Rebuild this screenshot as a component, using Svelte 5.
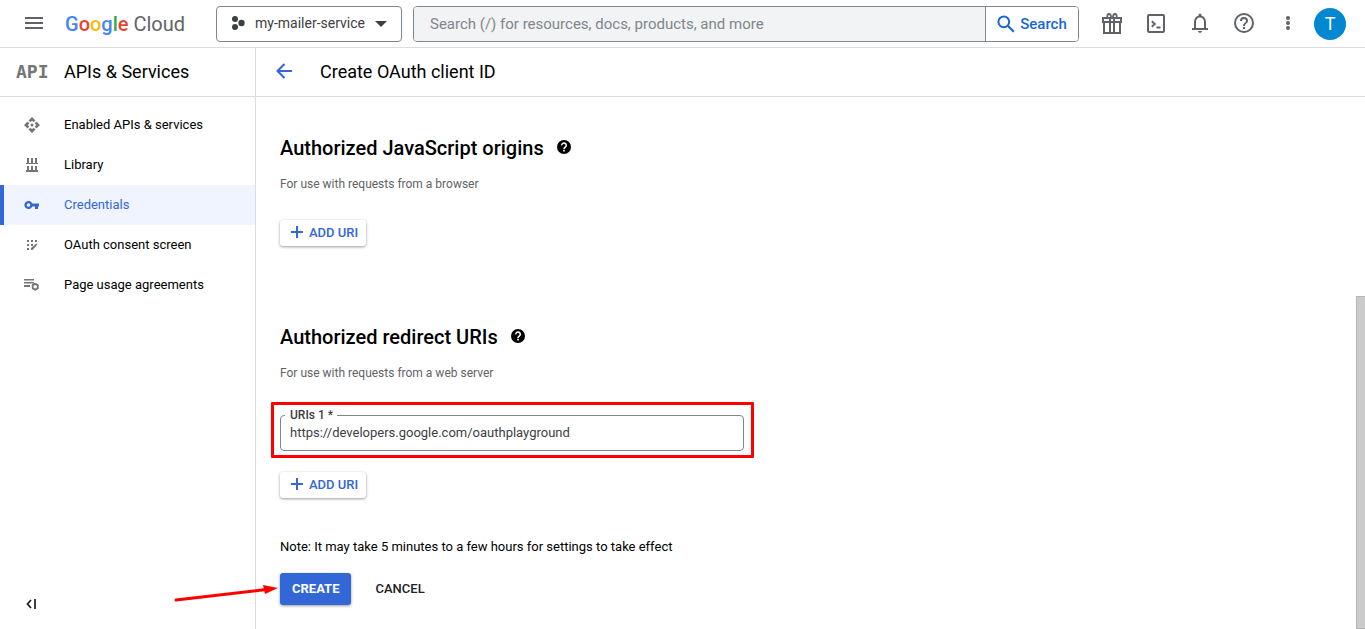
<script lang="ts">
	type NavItem = { id: string; label: string };

	const navItems: NavItem[] = [
		{ id: 'enabled', label: 'Enabled APIs & services' },
		{ id: 'library', label: 'Library' },
		{ id: 'credentials', label: 'Credentials' },
		{ id: 'consent', label: 'OAuth consent screen' },
		{ id: 'agreements', label: 'Page usage agreements' }
	];

	const brand = [
		['G', 'blue'], ['o', 'red'], ['o', 'yellow'],
		['g', 'blue'], ['l', 'green'], ['e', 'red']
	];

	let active = $state('credentials');
	let project = $state('my-mailer-service');
	let query = $state('');
	let origins = $state<string[]>([]);
	let redirects = $state<string[]>(['https://developers.google.com/oauthplayground']);
</script>

{#snippet helpIcon()}
	<svg class="help" viewBox="0 0 14 14" width="14" height="14" aria-hidden="true">
		<circle cx="7" cy="7" r="7" fill="#000" />
		<path d="M4.7 5.4a2.3 2.3 0 1 1 3.6 1.8c-.8.6-1.3.8-1.3 1.7" fill="none" stroke="#fff" stroke-width="1.5" />
		<path d="M6.2 9.8h1.6v1.6H6.2z" fill="#fff" />
	</svg>
{/snippet}

{#snippet addButton(list: string[])}
	<button class="add" onclick={() => list.push('')}>
		<svg viewBox="0 0 12 12" width="12" height="12" aria-hidden="true">
			<path d="M6 0v12M0 6h12" stroke="#3367d6" stroke-width="2" />
		</svg>
		ADD URI
	</button>
{/snippet}

{#snippet uriField(list: string[], i: number, name: string)}
	<div class="field">
		<label for="{name}-{i}">URIs {i + 1} *</label>
		<input id="{name}-{i}" type="text" bind:value={list[i]} />
	</div>
{/snippet}

<div class="page">
	<header class="topbar">
		<button class="icon-btn" aria-label="Main menu">
			<svg viewBox="0 0 24 24" width="24" height="24">
				<path d="M3 5h18v2H3zM3 10h18v2H3zM3 15h18v2H3z" fill="#5f6368" />
			</svg>
		</button>
		<a class="brand" href="#home">
			<span class="google">{#each brand as [letter, color]}<span class={color}>{letter}</span>{/each}</span>
			Cloud
		</a>

		<div class="project">
			<svg class="project-icon" viewBox="0 0 14 14" width="14" height="14" aria-hidden="true">
				<g fill="#3c4043">
					<circle cx="4" cy="3" r="3" />
					<circle cx="4" cy="11" r="3" />
					<circle cx="10.5" cy="7" r="3.2" />
				</g>
			</svg>
			<select aria-label="Project" bind:value={project}>
				<option>my-mailer-service</option>
			</select>
			<svg class="caret" viewBox="0 0 12 6" width="12" height="6" aria-hidden="true">
				<path d="M0 0h12L6 6z" fill="#3c4043" />
			</svg>
		</div>

		<form class="search" onsubmit={(e) => e.preventDefault()}>
			<input
				type="text"
				aria-label="Search resources"
				placeholder="Search (/) for resources, docs, products, and more"
				bind:value={query}
			/>
			<button type="submit">
				<svg viewBox="0 0 18 18" width="18" height="18" aria-hidden="true">
					<circle cx="6.8" cy="6.8" r="5.4" fill="none" stroke="#1967d2" stroke-width="2" />
					<path d="M10.8 10.8l6 6" stroke="#1967d2" stroke-width="2.2" />
				</svg>
				Search
			</button>
		</form>

		<div class="tools">
			<button class="icon-btn" aria-label="Free trial">
				<svg viewBox="0 0 24 24" width="24" height="24" fill="none" stroke="#5f6368" stroke-width="2">
					<path d="M3 6h18v4H3zM4 10v11h16V10M10 6v15M14 6v15" />
					<path d="M11 5c0-2-.8-3-2-3S7 3.300 7.400 5M13 5c0-2 .8-3 2-3s2 1.300 1.600 3" stroke-width="1.800" />
				</svg>
			</button>
			<button class="icon-btn" aria-label="Cloud Shell">
				<svg viewBox="0 0 24 24" width="24" height="24" fill="none" stroke="#5f6368" stroke-width="2">
					<rect x="4" y="3" width="16" height="17" rx="1" />
					<path d="M7.800 9.200l3 2.800-3 2.800M12.500 15.500h4" stroke-width="1.900" />
				</svg>
			</button>
			<button class="icon-btn" aria-label="Notifications">
				<svg viewBox="0 0 24 24" width="24" height="24" fill="#5f6368">
					<path d="M18 16v-6c0-3.070-1.630-5.640-4.500-6.320V3a1.500 1.500 0 0 0-3 0v.680C7.640 4.360 6 6.920 6 10v6H4v2h16v-2zm-2 0H8v-6c0-2.480 1.510-4.500 4-4.500s4 2.020 4 4.500zM10 19h4c0 1.100-.900 1.800-2 1.800s-2-.700-2-1.800z" />
				</svg>
			</button>
			<button class="icon-btn" aria-label="Help">
				<svg viewBox="0 0 24 24" width="24" height="24" fill="#5f6368">
					<path d="M11 17h2v-2h-2zm1-16a10 10 0 1 0 0 20 10 10 0 0 0 0-20zm0 18a8 8 0 1 1 0-16 8 8 0 0 1 0 16zm0-14a4 4 0 0 0-4 4h2a2 2 0 1 1 4 0c0 2-3 1.750-3 5h2c0-2.250 3-2.500 3-5a4 4 0 0 0-4-4z" />
				</svg>
			</button>
			<button class="icon-btn" aria-label="More options">
				<svg viewBox="0 0 24 24" width="24" height="24" fill="#5f6368">
					<circle cx="12" cy="6" r="2" />
					<circle cx="12" cy="11" r="2" />
					<circle cx="12" cy="16" r="2" />
				</svg>
			</button>
		</div>
		<button class="avatar" aria-label="Account">T</button>
	</header>

	<div class="body">
		<aside class="sidebar">
			<div class="bar product">
				<span class="api-logo">API</span>
				<span>APIs &amp; Services</span>
			</div>
			<nav>
				{#each navItems as item}
					<a
						href="#{item.id}"
						class:active={active === item.id}
						onclick={() => (active = item.id)}
					>
						<svg viewBox="0 0 16 16" width="16" height="16" fill="currentColor" aria-hidden="true">
							{#if item.id === 'enabled'}
								<path d="M8 0l3.500 3.500L9.600 5.300 8 3.800 6.400 5.300 4.500 3.500zM8 16l3.500-3.500-1.900-1.800L8 12.200l-1.600-1.500-1.900 1.800zM0 8l3.500-3.500 1.800 1.900L3.800 8l1.500 1.600-1.800 1.900zM16 8l-3.500-3.500-1.800 1.900L12.200 8l-1.500 1.600 1.800 1.900z" />
								<circle cx="8" cy="8" r="1.500" />
							{:else if item.id === 'library'}
								<path d="M3 1h2v5h2V1h2v5h2V1h2v5h1v1H2V6h1zM3 9h2v4h2V9h2v4h2V9h2v4h1v2H2v-2h1z" />
							{:else if item.id === 'credentials'}
								<path fill-rule="evenodd" d="M8.300 6.600A4.100 4.100 0 1 0 8.300 9.400H11V12h3V9.400h1V6.600zM4.500 6.200a1.800 1.800 0 1 1 0 3.600 1.800 1.800 0 0 1 0-3.600z" />
							{:else if item.id === 'consent'}
								<path d="M3 3h2v2H3zM7 3h2v2H7zM11 3h2v2h-2zM3 7h2v2H3zM7 7h2v2H7zM3 11h2v2H3z" />
								<path d="M7 13v-2l5.500-4.500 1 1L8.500 13z" />
							{:else}
								<path d="M0 2h10v1.500H0zM0 5h10v1.500H0zM0 8h6v2H0z" />
								<path d="M11.200 6v7.500M8 7.900l6.500 3.700M8 11.600l6.500-3.700" stroke="currentColor" stroke-width="2" />
								<circle cx="11.200" cy="9.750" r="2.600" fill="#fff" stroke="currentColor" stroke-width="1.600" />
							{/if}
						</svg>
						<span>{item.label}</span>
					</a>
				{/each}
			</nav>
			<button class="collapse" aria-label="Collapse menu">
				<svg viewBox="0 0 10 10" width="10" height="10">
					<path d="M5 1L1.500 5 5 9" fill="none" stroke="#202124" stroke-width="1.800" />
					<path d="M8 0h2v10H8z" fill="#3c4043" />
				</svg>
			</button>
		</aside>

		<main>
			<div class="bar title">
				<button class="icon-btn" aria-label="Back">
					<svg viewBox="0 0 16 16" width="16" height="16">
						<path d="M16 8H1.500M8.500 1L1.500 8l7 7" fill="none" stroke="#3367d6" stroke-width="2" />
					</svg>
				</button>
				<h1>Create OAuth client ID</h1>
			</div>

			<div class="scroller">
				<div class="content">
					<section>
						<h2>Authorized JavaScript origins {@render helpIcon()}</h2>
						<p class="hint">For use with requests from a browser</p>
						{#each origins as _, i}
							{@render uriField(origins, i, 'origin')}
						{/each}
						{@render addButton(origins)}
					</section>

					<section>
						<h2>Authorized redirect URIs {@render helpIcon()}</h2>
						<p class="hint">For use with requests from a web server</p>
						<div class="highlight">
							{#each redirects as _, i}
								{@render uriField(redirects, i, 'redirect')}
							{/each}
						</div>
						{@render addButton(redirects)}
					</section>

					<p class="note">Note: It may take 5 minutes to a few hours for settings to take effect</p>
					<div class="actions">
						<svg class="pointer" viewBox="0 0 106 20" width="106" height="20" aria-hidden="true">
							<path d="M2 16L92 5.500" stroke="#f00" stroke-width="3" stroke-linecap="round" />
							<path d="M104 4L89 1l2 9z" fill="#f00" />
						</svg>
						<button class="create">CREATE</button>
						<button class="cancel">CANCEL</button>
					</div>
				</div>
				<div class="track" aria-hidden="true"><div class="thumb"></div></div>
			</div>
		</main>
	</div>
</div>

<style>
	:global(body) {
		background: #fff;
		font-family: Roboto, 'Liberation Sans', sans-serif;
		font-size: 13px;
		color: #000;
	}

	.page :global(*) {
		box-sizing: border-box;
	}

	.page {
		display: flex;
		flex-direction: column;
		min-height: 100vh;
	}

	button,
	input,
	select {
		font: inherit;
	}

	button {
		border: none;
		background: none;
		padding: 0;
		cursor: pointer;
	}

	svg {
		display: block;
		flex-shrink: 0;
	}

	a {
		text-decoration: none;
		color: inherit;
	}

	/* Top bar */
	.topbar {
		display: flex;
		align-items: center;
		height: 48px;
		padding: 0 19px 0 22px;
		border-bottom: 1px solid #dadce0;
	}

	.brand {
		width: 132px;
		margin: 0 19px;
		font-size: 20px;
		color: #5f6368;
		white-space: nowrap;
	}

	.google {
		font-weight: 500;
	}

	.blue { color: #4285f4; }
	.red { color: #ea4335; }
	.yellow { color: #fbbc04; }
	.green { color: #34a853; }

	.project {
		position: relative;
		width: 186px;
		height: 36px;
	}

	.project select {
		appearance: none;
		width: 100%;
		height: 100%;
		padding: 0 32px 2px 38px;
		border: 1px solid #80868b;
		border-radius: 4px;
		background: #fff;
		font-size: 14px;
		color: #3c4043;
	}

	.project-icon,
	.caret {
		position: absolute;
		pointer-events: none;
	}

	.project-icon {
		top: 10px;
		left: 15px;
	}

	.caret {
		top: 15px;
		right: 15px;
	}

	.search {
		display: flex;
		flex: 1;
		height: 36px;
		margin: 0 21px 0 11px;
		border: 1px solid #80868b;
		border-radius: 4px;
		overflow: hidden;
	}

	.search input {
		flex: 1;
		min-width: 0;
		padding: 0 16px;
		border: none;
		border-right: 1px solid #80868b;
		background: #f1f3f4;
		font-size: 15px;
		color: #3c4043;
	}

	.search input::placeholder {
		color: #80868b;
	}

	.search button {
		display: flex;
		align-items: center;
		justify-content: center;
		gap: 5px;
		width: 92px;
		background: #fff;
		font-size: 15px;
		font-weight: 500;
		color: #1967d2;
	}

	.tools {
		display: flex;
		gap: 20px;
		margin-right: 14px;
	}

	.avatar {
		width: 32px;
		height: 32px;
		border-radius: 50%;
		background: #0288d1;
		font-size: 18px;
		color: #fff;
	}

	/* Body */
	.body {
		display: flex;
		flex: 1;
	}

	.bar {
		display: flex;
		align-items: center;
		height: 49px;
		padding-bottom: 2px;
		border-bottom: 1px solid #dadce0;
		font-size: 18px;
	}

	.sidebar {
		display: flex;
		flex-direction: column;
		width: 256px;
		flex-shrink: 0;
		border-right: 1px solid #dadce0;
	}

	.product {
		gap: 16px;
		padding-left: 16px;
	}

	.api-logo {
		width: 32px;
		font-family: 'DejaVu Sans Mono', monospace;
		font-weight: 700;
		color: #757575;
	}

	nav {
		padding-top: 8px;
	}

	nav a {
		display: flex;
		align-items: center;
		gap: 24px;
		height: 40px;
		padding-left: 20px;
		border-left: 4px solid transparent;
	}

	nav span {
		padding-bottom: 2px;
	}

	nav svg {
		color: #757575;
	}

	nav a.active {
		border-left-color: #3367d6;
		background: #f0f4ff;
		color: #3367d6;
	}

	nav a.active svg {
		color: #3367d6;
	}

	.collapse {
		align-self: flex-start;
		margin: auto 0 20px 26px;
	}

	main {
		display: flex;
		flex: 1;
		flex-direction: column;
		min-width: 0;
	}

	.title {
		gap: 28px;
		padding-left: 20px;
	}

	h1 {
		margin: 0;
		font-size: 18px;
		font-weight: 400;
	}

	.scroller {
		display: flex;
		flex: 1;
	}

	.content {
		flex: 1;
		min-width: 0;
		padding: 39px 24px 24px;
	}

	.track {
		display: flex;
		flex-direction: column;
		width: 9px;
	}

	.track::before {
		content: '';
		flex: 3;
	}

	.thumb {
		flex: 5;
		border: 1px solid #b5b5b5;
		border-right: none;
		background: #cbcbcb;
	}

	section {
		margin-bottom: 41px;
	}

	section:first-child {
		margin-bottom: 79px;
	}

	h2 {
		display: flex;
		align-items: center;
		gap: 13px;
		margin: 0 0 16px;
		font-size: 20px;
		font-weight: 500;
		line-height: 24px;
	}

	.help {
		margin-bottom: 2px;
	}

	.hint {
		margin: 0 0 28px;
		font-size: 12px;
		line-height: 16px;
		color: #5f6368;
	}

	.add {
		display: flex;
		align-items: center;
		gap: 6px;
		height: 26px;
		padding: 0 8px 2px 11px;
		border-radius: 3px;
		background: #fff;
		box-shadow: 0 1px 3px rgba(0, 0, 0, 0.4);
		font-weight: 500;
		color: #3367d6;
	}

	.highlight {
		max-width: 483px;
		margin: -7px 0 14px -9px;
		padding: 10px 7px 4px 6px;
		border: 3px solid #f00;
		border-radius: 1px;
	}

	.field {
		position: relative;
		max-width: 464px;
	}

	.field label {
		position: absolute;
		top: -7px;
		left: 5px;
		padding: 0 4px 0 5px;
		background: #fff;
		font-size: 12px;
		font-weight: 500;
		line-height: 14px;
		color: #3c4043;
	}

	.field input {
		display: block;
		width: 100%;
		height: 36px;
		padding: 0 9px 2px;
		border: 1px solid #80868b;
		border-radius: 4px;
		background: #fff;
		color: #3c4043;
	}

	.note {
		margin: 0 0 18px;
		line-height: 16px;
	}

	.actions {
		position: relative;
		display: flex;
		gap: 12px;
	}

	.actions button {
		height: 32px;
		padding: 0 12px 2px;
		border-radius: 3px;
		font-weight: 500;
	}

	.actions .create {
		background: #3367d6;
		box-shadow: 0 1px 3px rgba(0, 0, 0, 0.4);
		font-weight: 700;
		color: #fff;
	}

	.cancel {
		color: #202124;
	}

	/* Arrow reaching over the sidebar edge to the create button */
	.pointer {
		position: absolute;
		top: 11px;
		right: 100%;
	}
</style>
